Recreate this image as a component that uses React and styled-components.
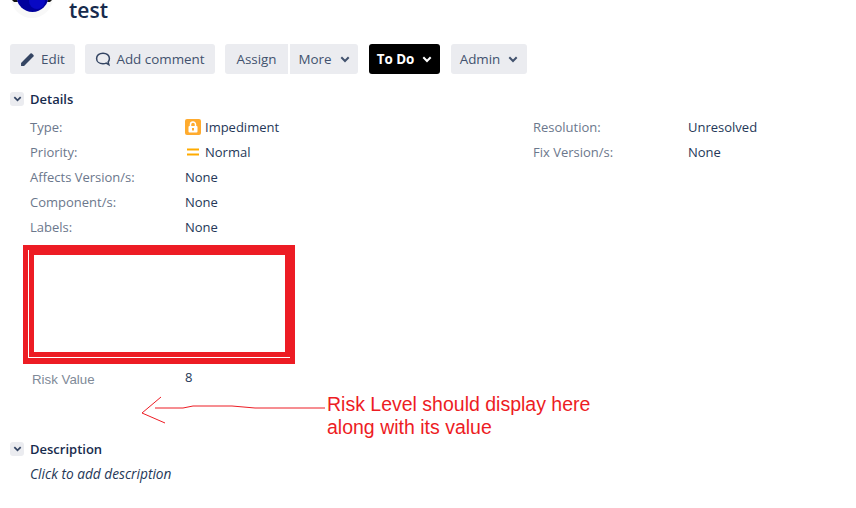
import React from "react"
import styled, { createGlobalStyle } from "styled-components"

const GlobalStyle = createGlobalStyle`
  html, body {
    margin: 0;
    padding: 0;
    background: #fff;
    overflow: hidden;
  }
  body {
    font-family: "Open Sans", "Noto Sans", sans-serif;
    font-size: 13px;
    color: #253858;
  }
`

const Page = styled.div`
  position: relative;
  width: 856px;
  height: 508px;
  overflow: hidden;
`

const IssueHeader = styled.header`
  display: flex;
  align-items: flex-start;
  gap: 14px;
  height: 22px;
  padding-left: 10px;
  margin-bottom: 22px;
`

const Avatar = styled.svg`
  display: block;
  flex: none;
  width: 45px;
  height: 20px;
`

const Title = styled.h1`
  margin: 0;
  font-size: 21px;
  line-height: 20px;
  font-weight: 600;
  color: #172b4d;
`

const Toolbar = styled.div`
  display: flex;
  padding-left: 10px;
  margin-bottom: 18px;
`

const Button = styled.button`
  display: flex;
  align-items: center;
  justify-content: center;
  gap: 5px;
  box-sizing: border-box;
  width: ${(p) => p.$w}px;
  height: 30px;
  margin-left: ${(p) => p.$gap || 0}px;
  padding: 0;
  border: 0;
  border-radius: ${(p) => p.$radius || "3px"};
  background: ${(p) => (p.$dark ? "#000" : "#ebecf0")};
  color: ${(p) => (p.$dark ? "#fff" : "#42526e")};
  font-family: inherit;
  font-size: 13.4px;
  font-weight: ${(p) => (p.$dark ? 700 : 400)};
`

const Chevron = styled.svg`
  display: block;
  flex: none;
  width: 10px;
  height: 7px;
  margin-left: 3px;
`

const SectionHead = styled.div`
  display: flex;
  align-items: center;
  gap: 6px;
  height: 14px;
  padding-left: 10px;
`

const Toggle = styled.span`
  display: flex;
  align-items: center;
  justify-content: center;
  width: 14px;
  height: 14px;
  border-radius: 3px;
  background: #ebecf0;
`

const SectionTitle = styled.h2`
  margin: 0;
  font-size: 13px;
  font-weight: 600;
  color: #172b4d;
`

const Details = styled.div`
  display: grid;
  grid-template-columns: 503px 1fr;
  padding: 8px 0 0 30px;
`

const Rows = styled.dl`
  margin: 0;
  display: grid;
  grid-template-columns: ${(p) => p.$label}px 1fr;
  grid-auto-rows: 25px;
  align-items: center;
`

const Label = styled.dt`
  color: #6b778c;
`

const Value = styled.dd`
  margin: 0;
  display: flex;
  align-items: center;
  gap: 4px;
  color: #253858;
`

const TypeIcon = styled.svg`
  display: block;
  width: 16px;
  height: 16px;
`

const RedactBox = styled.div`
  box-sizing: border-box;
  width: 272px;
  height: 119px;
  margin: 6px 0 0 23px;
  padding: 5px 5px 6px;
  background: #ed1c24;
`

const RedactEdge = styled.div`
  box-sizing: border-box;
  height: 100%;
  padding: 5px 5px 5px 5px;
  border-left: 1px solid #fff;
  border-bottom: 1px solid #fff;
`

const RedactFill = styled.div`
  height: 100%;
  background: #fff;
`

const RiskRow = styled.div`
  display: grid;
  grid-template-columns: 153px 1fr;
  padding: 4px 0 0 32px;
`

const RiskLabel = styled.span`
  font-family: "Liberation Sans", Arial, sans-serif;
  font-size: 13.3px;
  line-height: 20px;
  margin-top: 2px;
  color: #808a98;
`

const RiskValue = styled.span`
  font-size: 13px;
  line-height: 18px;
  color: #253858;
`

const Arrow = styled.svg`
  position: absolute;
  left: 0;
  top: 0;
  width: 856px;
  height: 508px;
  pointer-events: none;
`

const Note = styled.p`
  position: absolute;
  left: 327px;
  top: 393px;
  margin: 0;
  font-family: "Liberation Sans", Arial, sans-serif;
  font-size: 19.5px;
  line-height: 23px;
  color: #ed1c24;
`

const DescriptionHead = styled(SectionHead)`
  margin-top: 52px;
`

const Placeholder = styled.p`
  margin: 9px 0 0 30px;
  font-style: italic;
  font-size: 13.7px;
  line-height: 18px;
  color: #253858;
`

const DownIcon = ({ color = "#42526e" }) => (
  <Chevron viewBox="0 0 10 7">
    <path d="M1.3 1.3 5 5l3.7-3.7" fill="none" stroke={color} strokeWidth="2" />
  </Chevron>
)

const SmallChevron = styled(Chevron)`
  width: 9px;
  height: 6px;
  margin: 0;
`

const PencilIcon = () => (
  <svg width="16" height="16" viewBox="0 0 15 15">
    <path d="M1 11.200 9.800 2.400a1 1 0 0 1 1.400 0l1.400 1.400a1 1 0 0 1 0 1.400L3.800 14H1z" fill="#344563" />
  </svg>
)

const CommentIcon = () => (
  <svg width="16" height="16" viewBox="0 0 15 15">
    <path
      d="M7.500 2C4 2 1.500 4.100 1.500 7s2.500 5 6 5c1.200 0 2.200-.2 3-.6l2.500 1.400-.7-2.600c.8-.9 1.200-2 1.200-3.200 0-2.900-2.500-5-6-5z"
      fill="none"
      stroke="#344563"
      strokeWidth="1.400"
    />
  </svg>
)

const leftRows = [
  ["Affects Version/s:", "None"],
  ["Component/s:", "None"],
  ["Labels:", "None"],
]

export default function App() {
  return (
    <Page>
      <GlobalStyle />
      <IssueHeader>
        <Avatar viewBox="0 0 45 20">
          <circle cx="22" cy="-3" r="21" fill="#f8f8f8" />
          <path d="M2 0h5l1 2H4zM38 0h4l-2 2h-3z" fill="#111" />
          <circle cx="22.500" cy="-4" r="16" fill="#00009c" />
          <ellipse cx="27" cy="1" rx="8" ry="8" fill="#0808c4" />
        </Avatar>
        <Title>test</Title>
      </IssueHeader>

      <Toolbar>
        <Button $w={65}>
          <PencilIcon />
          Edit
        </Button>
        <Button $w={130} $gap={10}>
          <CommentIcon />
          Add comment
        </Button>
        <Button $w={63} $gap={10} $radius="3px 0 0 3px">
          Assign
        </Button>
        <Button $w={68} $gap={2} $radius="0 3px 3px 0">
          More
          <DownIcon />
        </Button>
        <Button $w={71} $gap={11} $dark>
          To Do
          <DownIcon color="#fff" />
        </Button>
        <Button $w={76} $gap={11}>
          Admin
          <DownIcon />
        </Button>
      </Toolbar>

      <SectionHead>
        <Toggle>
          <SmallChevron viewBox="0 0 10 7">
            <path d="M1.3 1.3 5 5l3.7-3.7" fill="none" stroke="#344563" strokeWidth="2" />
          </SmallChevron>
        </Toggle>
        <SectionTitle>Details</SectionTitle>
      </SectionHead>

      <Details>
        <Rows $label={155}>
          <Label>Type:</Label>
          <Value>
            <TypeIcon viewBox="0 0 16 16">
              <rect width="16" height="16" rx="2" fill="#ffab2e" />
              <rect x="3.500" y="7" width="9" height="6.500" rx="1" fill="#fff" />
              <path d="M5.500 7V5.500a2.500 2.500 0 0 1 5 0V7" fill="none" stroke="#fff" strokeWidth="1.500" />
              <rect x="7" y="9" width="2" height="2.500" fill="#ffab2e" />
            </TypeIcon>
            Impediment
          </Value>
          <Label>Priority:</Label>
          <Value>
            <TypeIcon viewBox="0 0 16 16">
              <rect x="2" y="4.500" width="12" height="2" fill="#ffab00" />
              <rect x="2" y="9.500" width="12" height="2" fill="#ffab00" />
            </TypeIcon>
            Normal
          </Value>
          {leftRows.map(([label, value]) => (
            <React.Fragment key={label}>
              <Label>{label}</Label>
              <Value>{value}</Value>
            </React.Fragment>
          ))}
        </Rows>
        <Rows $label={155}>
          <Label>Resolution:</Label>
          <Value>Unresolved</Value>
          <Label>Fix Version/s:</Label>
          <Value>None</Value>
        </Rows>
      </Details>

      <RedactBox>
        <RedactEdge>
          <RedactFill />
        </RedactEdge>
      </RedactBox>

      <RiskRow>
        <RiskLabel>Risk Value</RiskLabel>
        <RiskValue>8</RiskValue>
      </RiskRow>

      <DescriptionHead>
        <Toggle>
          <SmallChevron viewBox="0 0 10 7">
            <path d="M1.3 1.3 5 5l3.7-3.7" fill="none" stroke="#344563" strokeWidth="2" />
          </SmallChevron>
        </Toggle>
        <SectionTitle>Description</SectionTitle>
      </DescriptionHead>
      <Placeholder>Click to add description</Placeholder>

      <Arrow viewBox="0 0 856 508">
        <path
          d="M161 397 142 413 165 423M155 408H183L193 406H232L255 408H325"
          fill="none"
          stroke="#ed1c24"
          strokeWidth="1"
        />
      </Arrow>
      <Note>
        Risk Level should display here
        <br />
        along with its value
      </Note>
    </Page>
  )
}
